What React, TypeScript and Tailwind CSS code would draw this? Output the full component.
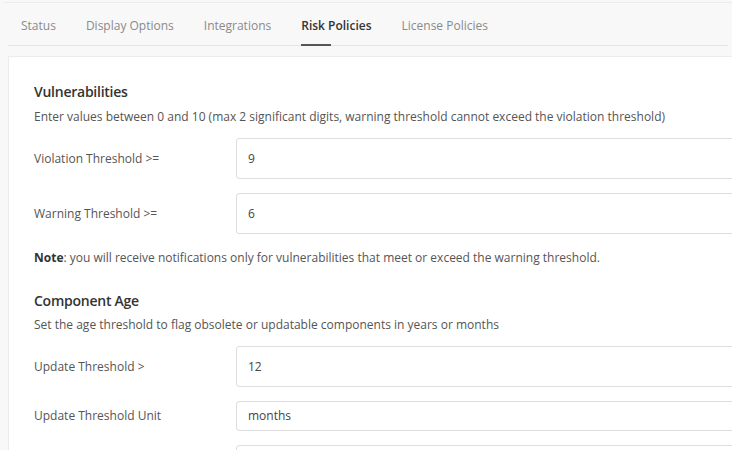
import React from 'react';

const tabs = ['Status', 'Display Options', 'Integrations', 'Risk Policies', 'License Policies'];

function Field({ label, value, tall = true }: { label: string; value: string; tall?: boolean }) {
  return (
    <div className="flex items-center">
      <div className="w-[202px] shrink-0 text-[12px] text-[#555]">{label}</div>
      <div
        className={`flex flex-1 items-center rounded-[3px] border border-[#dedede] bg-white pl-[11px] text-[12px] text-[#444] ${
          tall ? 'h-[41px]' : 'h-[30px]'
        }`}
      >
        {value}
      </div>
    </div>
  );
}

export default function App() {
  return (
    <div
      className="h-[450px] w-[732px] overflow-hidden bg-[#f8f8f8]"
      style={{ fontFamily: '"Open Sans", "Liberation Sans", sans-serif' }}
    >
      <div className="mt-[2px] ml-[4px] border-t border-[#ececec]">
        <div className="mx-[4px] flex h-[43px] items-end gap-[30px] border-b border-[#e6e6e6] pl-[13px]">
          {tabs.map((t) => {
            const active = t === 'Risk Policies';
            return (
              <div key={t} className="relative pb-[10px] text-[12px]">
                <span className={active ? 'font-semibold text-[#333]' : 'text-[#8a8a8a]'}>{t}</span>
                {active && <div className="absolute bottom-[-1px] left-0 h-[2px] w-[30px] bg-[#555]" />}
              </div>
            );
          })}
        </div>

        <div className="mt-[10px] ml-[4px] w-[760px] border border-[#ececec] bg-white pl-[25px] pt-[24px]">
          <div className="text-[14px] font-semibold tracking-[-0.25px] text-[#333]">Vulnerabilities</div>
          <div className="mt-[6px] text-[12px] text-[#555]">
            Enter values between 0 and 10 (max 2 significant digits, warning threshold cannot exceed the violation threshold)
          </div>

          <div className="mt-[12px] flex flex-col gap-[14px]">
            <Field label="Violation Threshold >=" value="9" />
            <Field label="Warning Threshold >=" value="6" />
          </div>

          <div className="mt-[15px] text-[12px] text-[#555]">
            <span className="font-bold text-[#333]">Note</span>: you will receive notifications only for vulnerabilities that meet or exceed the warning threshold.
          </div>

          <div className="mt-[23px] text-[14px] font-semibold tracking-[-0.25px] text-[#333]">Component Age</div>
          <div className="mt-[5px] text-[12px] text-[#555]">
            Set the age threshold to flag obsolete or updatable components in years or months
          </div>

          <div className="mt-[12px] flex flex-col gap-[14px]">
            <Field label="Update Threshold >" value="12" />
            <Field label="Update Threshold Unit" value="months" tall={false} />
            <Field label="" value="" />
          </div>
        </div>
      </div>
    </div>
  );
}
